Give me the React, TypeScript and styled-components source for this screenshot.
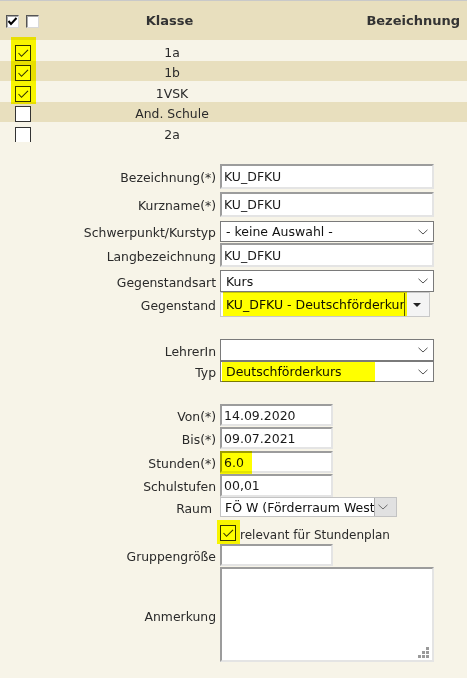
import React from 'react';
import styled, { createGlobalStyle } from 'styled-components';

const GlobalStyle = createGlobalStyle`
  html, body { margin: 0; padding: 0; background: #f7f4e8; }
  body {
    font-family: "DejaVu Sans", Verdana, sans-serif;
    font-size: 12.4px;
    color: #2a2a2a;
  }
`;

const Page = styled.div`
  width: 467px;
  height: 678px;
  overflow: hidden;
  background: #f7f4e8;
`;

/* ---------- table ---------- */
const TableWrap = styled.div`
  position: relative;
  border-top: 1px solid #c9c9c9;
`;

const HeaderRow = styled.div`
  display: grid;
  grid-template-columns: 45px 254px 1fr;
  height: 39px;
  align-items: center;
  background: #e8dfbe;
  font-weight: bold;
  font-size: 13px;
  color: #333;
`;

const HeaderChecks = styled.div`
  display: flex;
  gap: 7px;
  padding-left: 6px;
  margin-top: 2px;
`;

const OldBox = styled.span`
  box-sizing: border-box;
  width: 13px;
  height: 13px;
  display: flex;
  align-items: center;
  justify-content: center;
  background: #fff;
  border: 1px solid;
  border-color: #555 #d8d8d8 #d8d8d8 #555;
  box-shadow: inset 1px 1px 0 #a8a8a8;
`;

const HeaderCell = styled.div<{ $align: 'center' | 'right'; $pr: number }>`
  text-align: ${p => p.$align};
  padding-right: ${p => p.$pr}px;
`;

const Body = styled.div`
  height: 102px;
  overflow: hidden;
`;

const Row = styled.div<{ $alt: boolean }>`
  display: grid;
  grid-template-columns: 45px 254px 1fr;
  height: ${p => (p.$alt ? 20 : 21)}px;
  background: ${p => (p.$alt ? '#e8dfbe' : '#f7f4e8')};
`;

const CheckCell = styled.div`
  display: flex;
  align-items: flex-end;
  padding-left: 15px;
`;

const NameCell = styled.div`
  display: flex;
  align-items: center;
  justify-content: center;
  padding-top: 3px;
  font-size: 12.4px;
  color: #2a2a2a;
`;

const Box = styled.span`
  box-sizing: border-box;
  flex: none;
  width: 16px;
  height: 16px;
  border: 1px solid #333;
  background: #fff;
  display: flex;
  align-items: center;
  justify-content: center;
`;

const Marker = styled.span<{ $l: number; $t: number; $w: number; $h: number }>`
  position: absolute;
  left: ${p => p.$l}px;
  top: ${p => p.$t}px;
  width: ${p => p.$w}px;
  height: ${p => p.$h}px;
  background: #ffff00;
  mix-blend-mode: multiply;
  pointer-events: none;
`;

/* ---------- form ---------- */
const Form = styled.div`
  padding-top: 22px;
`;

const FormRow = styled.div<{ $pitch: number }>`
  display: grid;
  grid-template-columns: 216px 1fr;
  column-gap: 4px;
  align-items: start;
  height: ${p => p.$pitch}px;
`;

const Label = styled.div<{ $h: number; $pr?: number }>`
  height: ${p => p.$h}px;
  display: flex;
  align-items: center;
  justify-content: flex-end;
  padding-top: 2px;
  box-sizing: border-box;
  padding-right: ${p => p.$pr ?? 0}px;
  white-space: nowrap;
  font-size: 12.4px;
  color: #2a2a2a;
`;

const Field = styled.div`
  position: relative;
  display: flex;
  align-items: flex-start;
`;

const TextInput = styled.input<{ $h: number; $w?: number }>`
  box-sizing: border-box;
  width: ${p => p.$w ?? 214}px;
  height: ${p => p.$h}px;
  margin: 0;
  padding: 0 2px;
  border: 2px solid;
  border-color: #9c9c9c #e4e4e4 #e4e4e4 #9c9c9c;
  background: #fff;
  font: 12.5px "DejaVu Sans", Verdana, sans-serif;
  color: #1a1a1a;
  outline: none;
`;

const Select = styled.div<{ $h: number }>`
  box-sizing: border-box;
  width: 214px;
  height: ${p => p.$h}px;
  border: 1px solid #7a7a7a;
  background: #fff;
  display: flex;
  align-items: center;
  padding-left: 5px;
  font-size: 12.5px;
  color: #111;
`;

const SelectText = styled.span`
  flex: 1;
  white-space: nowrap;
  overflow: hidden;
`;

const ChevronSvg = styled.svg`
  flex: none;
  margin-right: 5px;
`;

const Chevron = ({ color = '#555' }: { color?: string }) => (
  <ChevronSvg width="10" height="6" viewBox="0 0 10 6">
    <path d="M0.5 0.8 L5 5 L9.5 0.8" fill="none" stroke={color} strokeWidth="1" />
  </ChevronSvg>
);

const OldSelect = styled.div<{ $w: number; $h: number; $border: string }>`
  box-sizing: border-box;
  width: ${p => p.$w}px;
  height: ${p => p.$h}px;
  border: 1px solid ${p => p.$border};
  background: #fff;
  display: flex;
  font-size: 12.5px;
  color: #111;
`;

const OldSelectText = styled.span<{ $pl: number }>`
  flex: 1;
  display: flex;
  align-items: center;
  padding-left: ${p => p.$pl}px;
  white-space: nowrap;
  overflow: hidden;
`;

const ArrowButton = styled.span<{ $w: number; $bg: string; $line: string }>`
  flex: none;
  width: ${p => p.$w}px;
  background: ${p => p.$bg};
  border-left: 1px solid ${p => p.$line};
  display: flex;
  align-items: center;
  justify-content: center;
`;

const Triangle = styled.span`
  width: 0;
  height: 0;
  border-left: 4px solid transparent;
  border-right: 4px solid transparent;
  border-top: 4px solid #222;
`;

const CheckLine = styled.label`
  display: flex;
  align-items: flex-start;
  padding-top: 5px;
  font-size: 12px;
  color: #2a2a2a;
  white-space: nowrap;
`;

const CheckText = styled.span`
  margin-left: 4px;
  margin-top: 3px;
`;

const TextArea = styled.div`
  box-sizing: border-box;
  width: 214px;
  height: 95px;
  border: 2px solid;
  border-color: #9c9c9c #e4e4e4 #e4e4e4 #9c9c9c;
  background: #fff;
  display: flex;
  align-items: flex-end;
  justify-content: flex-end;
  padding: 0 2px 1px 0;
`;

const Tick = ({ color = '#333' }: { color?: string }) => (
  <svg width="14" height="14" viewBox="0 0 14 14">
    <path d="M2.5 7 L5.5 10.3 L12 3.8" fill="none" stroke={color} strokeWidth="1.1" />
  </svg>
);

const BoldTick = () => (
  <svg width="11" height="11" viewBox="0 0 11 11">
    <path d="M1.5 5 L4 8 L9.5 2" fill="none" stroke="#000" strokeWidth="2" />
  </svg>
);

const Grip = () => (
  <svg width="12" height="12" viewBox="0 0 12 12">
    <g fill="#9a9a9a">
      <rect x="8" y="0" width="3" height="3" />
      <rect x="4" y="4" width="3" height="3" />
      <rect x="8" y="4" width="3" height="3" />
      <rect x="0" y="8" width="3" height="3" />
      <rect x="4" y="8" width="3" height="3" />
      <rect x="8" y="8" width="3" height="3" />
    </g>
  </svg>
);

const classes = [
  { name: '1a', checked: true },
  { name: '1b', checked: true },
  { name: '1VSK', checked: true },
  { name: 'And. Schule', checked: false },
  { name: '2a', checked: false },
];

export default function App() {
  return (
    <Page>
      <GlobalStyle />
      <TableWrap>
        <HeaderRow>
          <HeaderChecks>
            <OldBox>
              <BoldTick />
            </OldBox>
            <OldBox />
          </HeaderChecks>
          <HeaderCell $align="center" $pr={5}>Klasse</HeaderCell>
          <HeaderCell $align="right" $pr={7}>Bezeichnung</HeaderCell>
        </HeaderRow>
        <Body>
          {classes.map((c, i) => (
            <Row key={c.name} $alt={i % 2 === 1}>
              <CheckCell>
                <Box>{c.checked && <Tick />}</Box>
              </CheckCell>
              <NameCell>{c.name}</NameCell>
              <div />
            </Row>
          ))}
        </Body>
        <Marker $l={11} $t={36} $w={25} $h={67} />
      </TableWrap>

      <Form>
        <FormRow $pitch={28}>
          <Label $h={25}>Bezeichnung(*)</Label>
          <Field>
            <TextInput $h={25} readOnly value="KU_DFKU" />
          </Field>
        </FormRow>
        <FormRow $pitch={29}>
          <Label $h={25}>Kurzname(*)</Label>
          <Field>
            <TextInput $h={25} readOnly value="KU_DFKU" />
          </Field>
        </FormRow>
        <FormRow $pitch={22}>
          <Label $h={21}>Schwerpunkt/Kurstyp</Label>
          <Field>
            <Select $h={21}>
              <SelectText>- keine Auswahl -</SelectText>
              <Chevron />
            </Select>
          </Field>
        </FormRow>
        <FormRow $pitch={27}>
          <Label $h={24}>Langbezeichnung</Label>
          <Field>
            <TextInput $h={24} readOnly value="KU_DFKU" />
          </Field>
        </FormRow>
        <FormRow $pitch={22}>
          <Label $h={22}>Gegenstandsart</Label>
          <Field>
            <Select $h={22}>
              <SelectText>Kurs</SelectText>
              <Chevron />
            </Select>
          </Field>
        </FormRow>
        <FormRow $pitch={47}>
          <Label $h={25}>Gegenstand</Label>
          <Field>
            <OldSelect $w={210} $h={25} $border="#c8c8c8">
              <OldSelectText $pl={5}>KU_DFKU - Deutschförderkurs</OldSelectText>
              <ArrowButton $w={24} $bg="#f4f4f4" $line="#555">
                <Triangle />
              </ArrowButton>
            </OldSelect>
            <Marker $l={3} $t={0} $w={184} $h={24} />
          </Field>
        </FormRow>

        <FormRow $pitch={22}>
          <Label $h={22}>LehrerIn</Label>
          <Field>
            <Select $h={22}>
              <SelectText />
              <Chevron />
            </Select>
          </Field>
        </FormRow>
        <FormRow $pitch={43}>
          <Label $h={21}>Typ</Label>
          <Field>
            <Select $h={21}>
              <SelectText>Deutschförderkurs</SelectText>
              <Chevron />
            </Select>
            <Marker $l={2} $t={1} $w={153} $h={20} />
          </Field>
        </FormRow>

        <FormRow $pitch={23}>
          <Label $h={22}>Von(*)</Label>
          <Field>
            <TextInput $h={22} $w={113} readOnly value="14.09.2020" />
          </Field>
        </FormRow>
        <FormRow $pitch={24}>
          <Label $h={22}>Bis(*)</Label>
          <Field>
            <TextInput $h={22} $w={113} readOnly value="09.07.2021" />
          </Field>
        </FormRow>
        <FormRow $pitch={23}>
          <Label $h={22}>Stunden(*)</Label>
          <Field>
            <TextInput $h={22} $w={113} readOnly value="6.0" />
            <Marker $l={0} $t={0} $w={32} $h={23} />
          </Field>
        </FormRow>
        <FormRow $pitch={23}>
          <Label $h={23}>Schulstufen</Label>
          <Field>
            <TextInput $h={23} $w={113} readOnly value="00,01" />
          </Field>
        </FormRow>
        <FormRow $pitch={23}>
          <Label $h={21} $pr={4}>Raum</Label>
          <Field>
            <OldSelect $w={177} $h={20} $border="#c3c3c3">
              <OldSelectText $pl={4}>FÖ W (Förderraum West)</OldSelectText>
              <ArrowButton $w={21} $bg="#e1e1e1" $line="#adadad">
                <Chevron color="#6d6d6d" />
              </ArrowButton>
            </OldSelect>
          </Field>
        </FormRow>
        <FormRow $pitch={24}>
          <div />
          <Field>
            <CheckLine>
              <Box>
                <Tick />
              </Box>
              <CheckText>relevant für Stundenplan</CheckText>
            </CheckLine>
            <Marker $l={-3} $t={0} $w={23} $h={24} />
          </Field>
        </FormRow>
        <FormRow $pitch={23}>
          <Label $h={22}>Gruppengröße</Label>
          <Field>
            <TextInput $h={22} $w={113} readOnly value="" />
          </Field>
        </FormRow>
        <FormRow $pitch={95}>
          <Label $h={97}>Anmerkung</Label>
          <Field>
            <TextArea>
              <Grip />
            </TextArea>
          </Field>
        </FormRow>
      </Form>
    </Page>
  );
}
